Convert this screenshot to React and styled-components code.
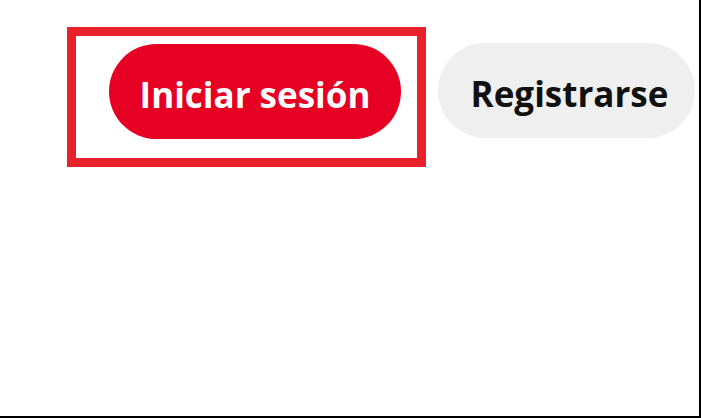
import { createGlobalStyle, styled } from "styled-components";

const GlobalStyle = createGlobalStyle`
  html, body {
    margin: 0;
    padding: 0;
    background: #ffffff;
  }
  * {
    box-sizing: border-box;
  }
`;

const Frame = styled.div`
  width: 701px;
  height: 418px;
  background: #ffffff;
  border-right: 2px solid #000;
  border-bottom: 2px solid #000;
  overflow: hidden;
  font-family: "Open Sans", "Noto Sans", sans-serif;
`;

const Header = styled.div`
  display: flex;
  align-items: flex-start;
  gap: 12px;
  padding: 27px 0 0 67px;
`;

const Highlight = styled.div`
  border: 9px solid #e8212a;
  padding: 8px 16px 19px 33px;
`;

const PillButton = styled.button`
  height: 95px;
  width: ${(p) => p.$width}px;
  margin-top: ${(p) => p.$offset || 0}px;
  padding: 0 0 0 ${(p) => p.$shift || 0}px;
  border: none;
  border-radius: 48px;
  display: flex;
  align-items: center;
  justify-content: center;
  font-family: inherit;
  font-size: 35px;
  font-weight: 700;
  letter-spacing: 0;
  line-height: 1;
  cursor: pointer;
  background: ${(p) => (p.$primary ? "#e60023" : "#efefef")};
  color: ${(p) => (p.$primary ? "#ffffff" : "#111111")};

  span {
    display: block;
    transform: translateY(3px);
  }
`;

export default function App() {
  return (
    <>
      <GlobalStyle />
      <Frame>
        <Header>
          <Highlight>
            <PillButton $primary $width={292}>
              <span>Iniciar sesión</span>
            </PillButton>
          </Highlight>
          <PillButton $width={257} $offset={16} $shift={6}>
            <span>Registrarse</span>
          </PillButton>
        </Header>
      </Frame>
    </>
  );
}
